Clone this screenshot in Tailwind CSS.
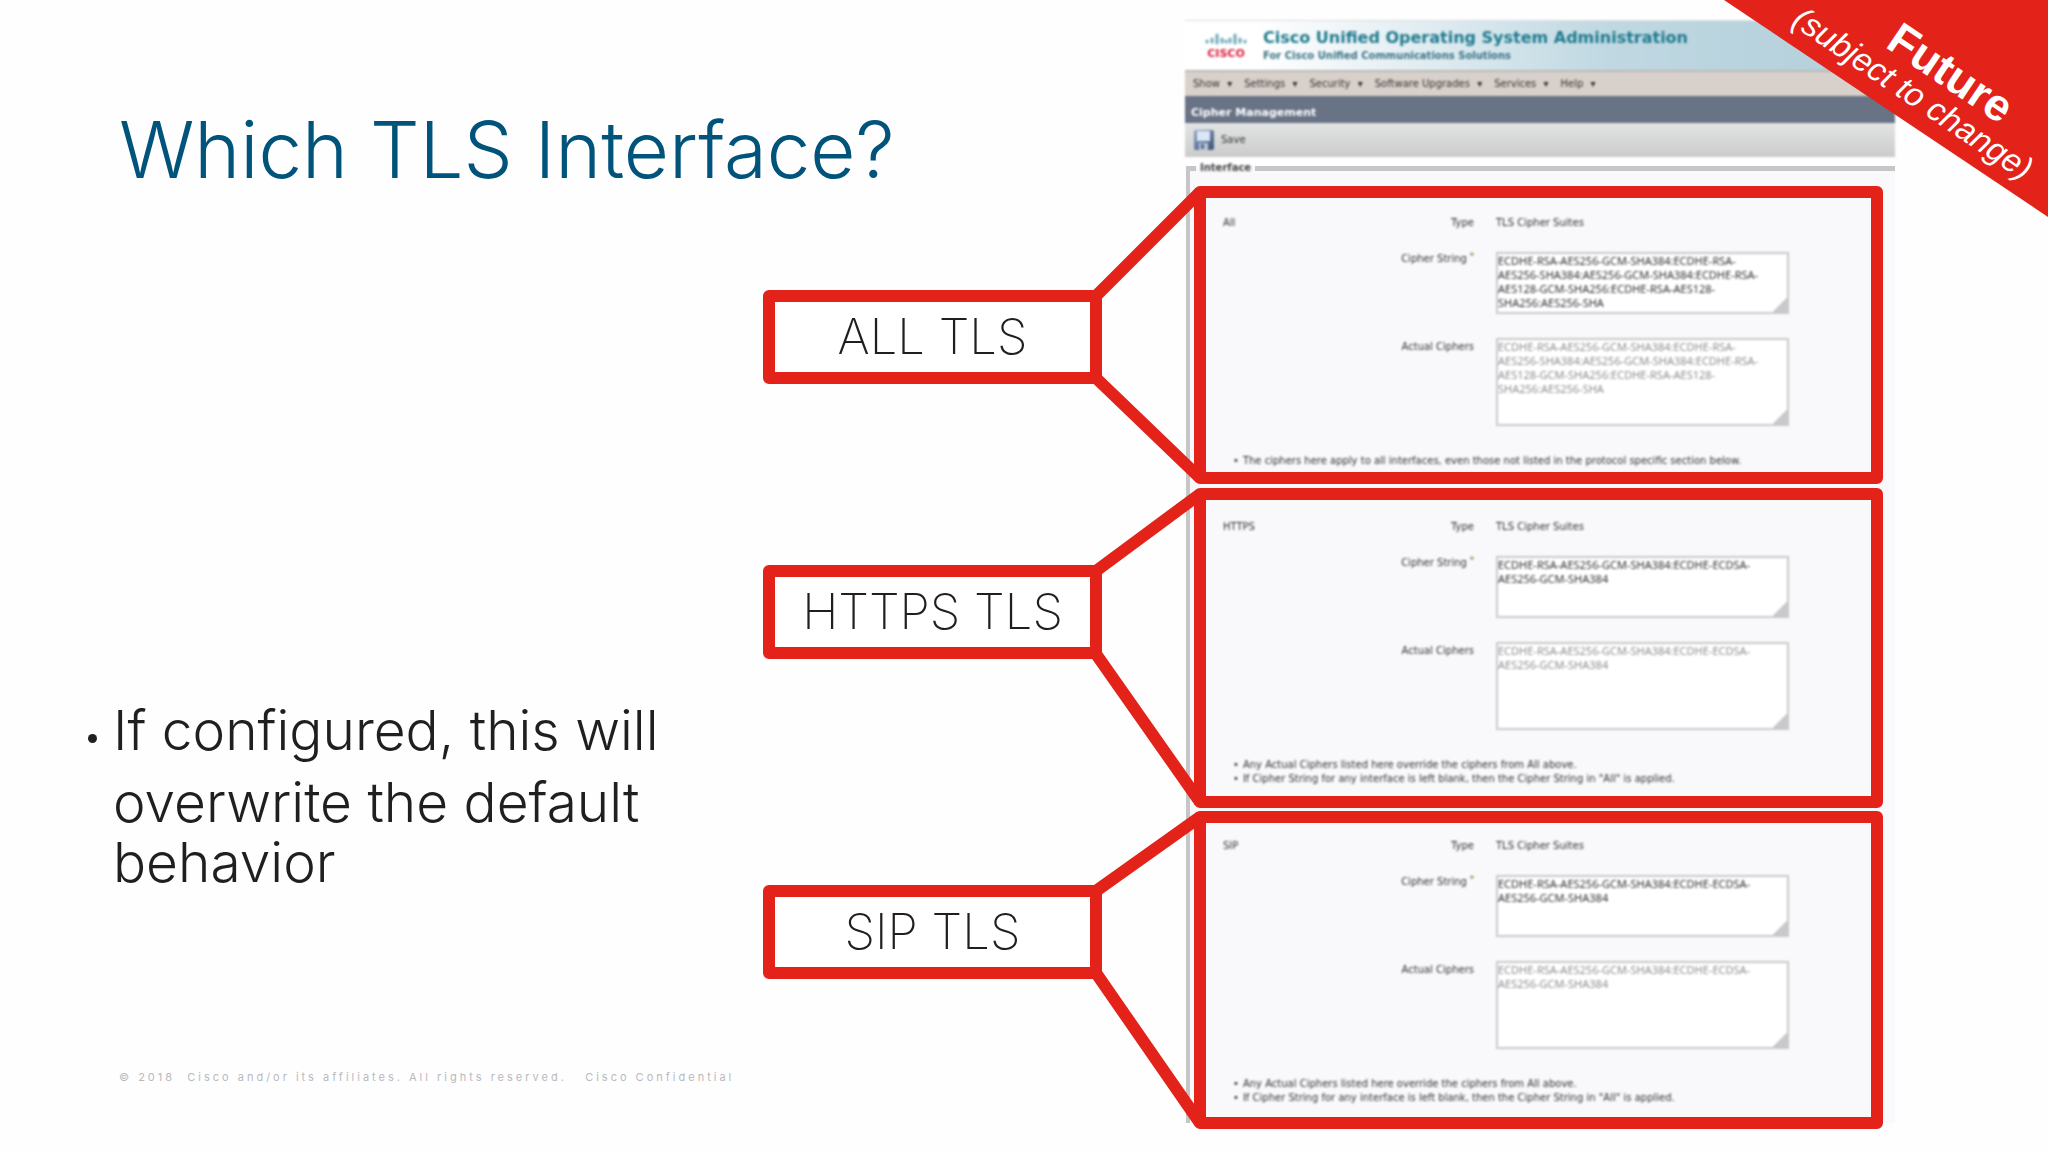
<!DOCTYPE html>
<html lang="en">
<head>
    <meta charset="UTF-8">
    <meta name="viewport" content="width=device-width, initial-scale=1.0">
    <title>Which TLS Interface?</title>
    <script src="https://cdn.jsdelivr.net/npm/@tailwindcss/browser@4"></script>
</head>
<body class="bg-[#fefefe] min-h-screen overflow-hidden font-['Inter',sans-serif] text-[#1f1f1f]">

    <main class="relative min-h-screen grid grid-cols-[minmax(0,763fr)_minmax(0,339fr)_minmax(0,83fr)_minmax(0,710fr)_minmax(0,153fr)] items-start overflow-hidden">

        <!-- Slide text -->
        <div class="pl-[87px] pt-[100px]">
            <h1 class="pl-8 text-[78px] leading-[100px] font-light text-[#00537a] whitespace-nowrap">Which TLS Interface?</h1>
            <ul class="mt-[494px]">
                <li class="flex">
                    <span class="mt-10 mr-4 ml-px size-[9px] shrink-0 rounded-full bg-[#1f1f1f]"></span>
                    <p class="text-[55px] font-light leading-12 whitespace-nowrap">
                        <span class="block leading-[72px]">If configured, this will</span>
                        <span class="block leading-[72px]">overwrite the default</span>
                        <span class="block">behavior</span>
                    </p>
                </li>
            </ul>
            <footer class="mt-[183px] pl-8 text-[11px] leading-4 tracking-[3px] text-[#b9b9bd] whitespace-pre">© 2018  Cisco and/or its affiliates. All rights reserved.   Cisco Confidential</footer>
        </div>

        <!-- Callout labels -->
        <div class="pt-[290px] text-[49px] leading-[70px] font-extralight text-center whitespace-nowrap">
            <div class="border-12 border-[#e32219] rounded-md bg-white">ALL TLS</div>
            <div class="mt-[181px] border-12 border-[#e32219] rounded-md bg-white">HTTPS TLS</div>
            <div class="mt-[226px] border-12 border-[#e32219] rounded-md bg-white">SIP TLS</div>
        </div>

        <!-- Admin console -->
        <div class="col-start-4 pt-5 font-['DejaVu_Sans',sans-serif] text-[10px] leading-[14px] text-[#333]">
            <div class="blur-[1px]">
                <header class="flex items-center h-[50px] pl-5 gap-4 border-t border-[#ddd] bg-linear-to-r from-white from-10% via-[#bfd8e2] via-60% to-[#b4cfdb]">
                    <svg class="w-[42px] h-7 shrink-0" viewBox="0 0 42 28" aria-label="Cisco">
                        <g stroke="#6fabbb" stroke-width="3" stroke-linecap="round">
                            <path d="M2 9v1M7 7v3M12 3v8M17 7v3M21 9v1M25 7v3M30 3v8M35 7v3M40 9v1"/>
                        </g>
                        <text x="21" y="25" text-anchor="middle" font-family="DejaVu Sans" font-weight="700" font-size="11" fill="#d9203f">CISCO</text>
                    </svg>
                    <div class="font-bold whitespace-nowrap">
                        <h2 class="text-base leading-5 text-[#1f7b8e]">Cisco Unified Operating System Administration</h2>
                        <p class="text-[10px] leading-4 text-[#3b7485]">For Cisco Unified Communications Solutions</p>
                    </div>
                </header>
                <nav class="flex items-center gap-3 h-[26px] pl-2 bg-[#d8d0ca] border-t-2 border-[#bdbab8] whitespace-nowrap">
                    <button>Show <span class="pl-1">▾</span></button>
                    <button>Settings <span class="pl-1">▾</span></button>
                    <button>Security <span class="pl-1">▾</span></button>
                    <button>Software Upgrades <span class="pl-1">▾</span></button>
                    <button>Services <span class="pl-1">▾</span></button>
                    <button>Help <span class="pl-1">▾</span></button>
                </nav>
                <h3 class="h-[27px] pl-1.5 pt-[7px] bg-[#687386] text-white text-[11px] leading-5 font-bold">Cipher Management</h3>
                <div class="h-[34px] pl-2 flex items-center bg-linear-to-b from-[#e2e5e4] to-[#cbcbcb]">
                    <button class="flex items-center gap-1.5">
                        <svg class="size-[22px]" viewBox="0 0 22 22">
                            <defs>
                                <linearGradient id="disk" x1="0" y1="0" x2="1" y2="1">
                                    <stop offset="0" stop-color="#8fa6c8"/>
                                    <stop offset="1" stop-color="#3f5275"/>
                                </linearGradient>
                            </defs>
                            <rect x="1" y="1" width="20" height="20" rx="2" fill="url(#disk)"/>
                            <rect x="4" y="2" width="13" height="10" fill="#dbe6f6"/>
                            <rect x="6" y="14" width="9" height="7" fill="#b9c4d4"/>
                            <rect x="8" y="15" width="3" height="5" fill="#5a6f92"/>
                        </svg>
                        Save
                    </button>
                </div>
            </div>

            <fieldset class="mt-1 ml-px pt-[11px] pl-1 pr-3 border-t-5 border-l-4 border-[#c6c6c9] bg-[#f9f8fb] h-[962px]">
                <legend class="ml-0.5 px-1 font-bold text-[#444] blur-[1px]">Interface</legend>

                <section class="relative border-12 border-[#e32219] rounded-md">
                    <svg class="absolute -left-[120px] -top-3 w-[120px] h-[298px] overflow-visible" viewBox="0 0 120 298" fill="none" stroke="#e32219" stroke-width="12">
                        <path d="M10 110L114 6M10 192L114 292"/>
                    </svg>
                    <div class="blur-[1px] pt-[18px] pb-1">
                        <div class="grid grid-cols-[268px_293px] gap-x-[22px]">
                            <div class="pl-[17px] flex justify-between"><span>All</span><span>Type</span></div>
                            <div>TLS Cipher Suites</div>
                            <label for="all-string" class="mt-[22px] text-right">Cipher String <sup class="text-[#6b7a1e] font-bold">*</sup></label>
                            <div class="relative mt-[22px] h-[62px]">
                                <textarea id="all-string" class="block size-full resize-none overflow-hidden border-2 border-[#c9c9cc] bg-white p-0 whitespace-pre font-['Noto_Sans',sans-serif] text-[11px]">ECDHE-RSA-AES256-GCM-SHA384:ECDHE-RSA-
AES256-SHA384:AES256-GCM-SHA384:ECDHE-RSA-
AES128-GCM-SHA256:ECDHE-RSA-AES128-
SHA256:AES256-SHA</textarea>
                                <span class="absolute right-px bottom-px size-4 bg-linear-to-br from-transparent from-50% to-[#c9c9cc] to-50%"></span>
                            </div>
                            <label for="all-actual" class="mt-[26px] text-right">Actual Ciphers</label>
                            <div class="relative mt-6 h-[88px]">
                                <textarea id="all-actual" readonly class="block size-full resize-none overflow-hidden border-2 border-[#c9c9cc] bg-white p-0 whitespace-pre text-[#8f8f8f] font-['Noto_Sans',sans-serif] text-[11px]">ECDHE-RSA-AES256-GCM-SHA384:ECDHE-RSA-
AES256-SHA384:AES256-GCM-SHA384:ECDHE-RSA-
AES128-GCM-SHA256:ECDHE-RSA-AES128-
SHA256:AES256-SHA</textarea>
                                <span class="absolute right-px bottom-px size-4 bg-linear-to-br from-transparent from-50% to-[#c9c9cc] to-50%"></span>
                            </div>
                        </div>
                        <ul class="mt-7 pl-[27px] whitespace-nowrap">
                            <li class="before:content-['•'] before:mr-1">The ciphers here apply to all interfaces, even those not listed in the protocol specific section below.</li>
                        </ul>
                    </div>
                </section>

                <section class="relative mt-1 border-12 border-[#e32219] rounded-md">
                    <svg class="absolute -left-[120px] -top-3 w-[120px] h-[320px] overflow-visible" viewBox="0 0 120 320" fill="none" stroke="#e32219" stroke-width="12">
                        <path d="M10 83L114 6M10 166L114 314"/>
                    </svg>
                    <div class="blur-[1px] pt-5 pb-[10px]">
                        <div class="grid grid-cols-[268px_293px] gap-x-[22px]">
                            <div class="pl-[17px] flex justify-between"><span>HTTPS</span><span>Type</span></div>
                            <div>TLS Cipher Suites</div>
                            <label for="https-string" class="mt-[22px] text-right">Cipher String <sup class="text-[#6b7a1e] font-bold">*</sup></label>
                            <div class="relative mt-[22px] h-[62px]">
                                <textarea id="https-string" class="block size-full resize-none overflow-hidden border-2 border-[#c9c9cc] bg-white p-0 whitespace-pre font-['Noto_Sans',sans-serif] text-[11px]">ECDHE-RSA-AES256-GCM-SHA384:ECDHE-ECDSA-
AES256-GCM-SHA384</textarea>
                                <span class="absolute right-px bottom-px size-4 bg-linear-to-br from-transparent from-50% to-[#c9c9cc] to-50%"></span>
                            </div>
                            <label for="https-actual" class="mt-[26px] text-right">Actual Ciphers</label>
                            <div class="relative mt-6 h-[88px]">
                                <textarea id="https-actual" readonly class="block size-full resize-none overflow-hidden border-2 border-[#c9c9cc] bg-white p-0 whitespace-pre text-[#8f8f8f] font-['Noto_Sans',sans-serif] text-[11px]">ECDHE-RSA-AES256-GCM-SHA384:ECDHE-ECDSA-
AES256-GCM-SHA384</textarea>
                                <span class="absolute right-px bottom-px size-4 bg-linear-to-br from-transparent from-50% to-[#c9c9cc] to-50%"></span>
                            </div>
                        </div>
                        <ul class="mt-7 pl-[27px] whitespace-nowrap">
                            <li class="before:content-['•'] before:mr-1">Any Actual Ciphers listed here override the ciphers from All above.</li>
                            <li class="before:content-['•'] before:mr-1">If Cipher String for any interface is left blank, then the Cipher String in "All" is applied.</li>
                        </ul>
                    </div>
                </section>

                <section class="relative mt-[3px] border-12 border-[#e32219] rounded-md">
                    <svg class="absolute -left-[120px] -top-3 w-[120px] h-[318px] overflow-visible" viewBox="0 0 120 318" fill="none" stroke="#e32219" stroke-width="12">
                        <path d="M10 80L114 6M10 162L114 312"/>
                    </svg>
                    <div class="blur-[1px] pt-4 pb-3">
                        <div class="grid grid-cols-[268px_293px] gap-x-[22px]">
                            <div class="pl-[17px] flex justify-between"><span>SIP</span><span>Type</span></div>
                            <div>TLS Cipher Suites</div>
                            <label for="sip-string" class="mt-[22px] text-right">Cipher String <sup class="text-[#6b7a1e] font-bold">*</sup></label>
                            <div class="relative mt-[22px] h-[62px]">
                                <textarea id="sip-string" class="block size-full resize-none overflow-hidden border-2 border-[#c9c9cc] bg-white p-0 whitespace-pre font-['Noto_Sans',sans-serif] text-[11px]">ECDHE-RSA-AES256-GCM-SHA384:ECDHE-ECDSA-
AES256-GCM-SHA384</textarea>
                                <span class="absolute right-px bottom-px size-4 bg-linear-to-br from-transparent from-50% to-[#c9c9cc] to-50%"></span>
                            </div>
                            <label for="sip-actual" class="mt-[26px] text-right">Actual Ciphers</label>
                            <div class="relative mt-6 h-[88px]">
                                <textarea id="sip-actual" readonly class="block size-full resize-none overflow-hidden border-2 border-[#c9c9cc] bg-white p-0 whitespace-pre text-[#8f8f8f] font-['Noto_Sans',sans-serif] text-[11px]">ECDHE-RSA-AES256-GCM-SHA384:ECDHE-ECDSA-
AES256-GCM-SHA384</textarea>
                                <span class="absolute right-px bottom-px size-4 bg-linear-to-br from-transparent from-50% to-[#c9c9cc] to-50%"></span>
                            </div>
                        </div>
                        <ul class="mt-7 pl-[27px] whitespace-nowrap">
                            <li class="before:content-['•'] before:mr-1">Any Actual Ciphers listed here override the ciphers from All above.</li>
                            <li class="before:content-['•'] before:mr-1">If Cipher String for any interface is left blank, then the Cipher String in "All" is applied.</li>
                        </ul>
                    </div>
                </section>
            </fieldset>
        </div>

        <!-- Corner ribbon -->
        <aside class="absolute top-0 right-0 w-[324px] h-[217px] overflow-hidden text-white font-['Liberation_Sans',sans-serif]">
            <svg class="absolute inset-0 size-full" viewBox="0 0 324 217"><path d="M0 0H324V217Z" fill="#e32219"/></svg>
            <div class="absolute top-[39px] -right-[26px] w-[300px] rotate-[34deg] text-center whitespace-nowrap">
                <p class="pl-10 text-[45px] leading-10 font-bold">Future</p>
                <p class="text-[33px] leading-9 italic">(subject to change)</p>
            </div>
        </aside>
    </main>

</body>
</html>
